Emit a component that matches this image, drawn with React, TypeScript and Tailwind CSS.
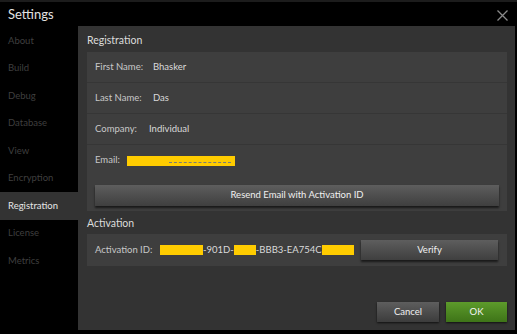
import React from 'react';

const navItems = ['About', 'Build', 'Debug', 'Database', 'View', 'Encryption', 'Registration', 'License', 'Metrics'];

const fields = [
  { label: 'First Name:', value: 'Bhasker', w: 'w-[58px]' },
  { label: 'Last Name:', value: 'Das', w: 'w-[58px]' },
  { label: 'Company:', value: 'Individual', w: 'w-[54px]' },
];

const Redact = ({ w }: { w: string }) => <span className={`inline-block shrink-0 h-[10px] bg-[#ffcc00] ${w}`} />;

const App: React.FC = () => {
  const active = 'Registration';
  return (
    <div
      className="w-[517px] h-[334px] bg-black border-t-2 border-[#1c1c1c] flex flex-col overflow-hidden text-[#d0d0d0]"
      style={{ fontFamily: 'Lato, "Open Sans", sans-serif' }}
    >
      {/* タイトルバー */}
      <div className="h-[24px] flex items-center justify-between pl-[8px] pr-[9px] shrink-0">
        <span className="text-[13px] text-[#e2e2e2] leading-none">Settings</span>
        <svg width="11" height="11" viewBox="0 0 11 11" className="mt-[2px]">
          <path d="M0.5 0.5 L10.5 10.5 M10.5 0.5 L0.5 10.5" stroke="#8a8a8a" strokeWidth="1.3" />
        </svg>
      </div>

      <div className="flex flex-1 min-h-0 pr-[2px] pb-[4px]">
        {/* サイドバー */}
        <div className="w-[78px] shrink-0 pt-[1px] flex flex-col">
          {navItems.map((item) => (
            <div
              key={item}
              className={`h-[27.5px] flex items-center pl-[8px] text-[9.5px] ${
                item === active ? 'bg-[#333333] text-[#e6e6e6]' : 'text-[#3f3f3f]'
              }`}
            >
              {item}
            </div>
          ))}
        </div>

        {/* メインパネル */}
        <div className="flex-1 min-w-0 overflow-hidden bg-[#333333] flex flex-col pl-[9px] pr-[8px]">
          <div className="h-[26px] flex items-end pb-[3px] text-[10.5px] text-[#dcdcdc]">Registration</div>
          <div className="bg-[#3e3e3e] flex flex-col">
            {fields.map((f) => (
              <div key={f.label} className="h-[31px] flex items-center px-[8px] border-b border-[#363636] text-[9.5px]">
                <span className={`text-[#c8c8c8] shrink-0 ${f.w}`}>{f.label}</span>
                <span className="text-[#dadada]">{f.value}</span>
              </div>
            ))}
            <div className="h-[31px] flex items-center px-[8px] text-[9.5px]">
              <span className="text-[#c8c8c8] w-[32px] shrink-0">Email:</span>
              <span className="relative inline-flex items-center">
                <Redact w="w-[108px]" />
                <span className="absolute left-[42px] top-[6px] w-[62px] border-t border-dashed border-[#7a7a7a]" />
              </span>
            </div>
            <div className="pt-[4px] pb-[5px] px-[8px]">
              <button className="w-full h-[21px] text-[9.5px] text-[#f0f0f0] bg-gradient-to-b from-[#5e5e5e] to-[#3f3f3f] shadow-[0_2px_2px_rgba(0,0,0,0.6)]">
                Resend Email with Activation ID
              </button>
            </div>
          </div>

          <div className="h-[23px] flex items-end pb-[2px] text-[10.5px] text-[#dcdcdc]">Activation</div>
          <div className="bg-[#3e3e3e] h-[32px] flex items-center px-[8px] text-[9.5px] whitespace-nowrap">
            <span className="text-[#c8c8c8] shrink-0 w-[65px]">Activation ID:</span>
            <span className="flex items-center text-[#dadada] shrink-0">
              <Redact w="w-[43px]" />
              <span>-901D-</span>
              <Redact w="w-[22px]" />
              <span>-BBB3-EA754C</span>
              <Redact w="w-[32px]" />
            </span>
            <button className="ml-auto mr-[1px] shrink-0 w-[137px] h-[20px] text-[9.5px] text-[#f0f0f0] bg-gradient-to-b from-[#5e5e5e] to-[#3f3f3f] shadow-[0_2px_2px_rgba(0,0,0,0.6)]">
              Verify
            </button>
          </div>

          <div className="flex-1" />
          <div className="flex justify-end gap-[7px] pb-[8px]">
            <button className="w-[62px] h-[20px] text-[9.5px] text-[#f0f0f0] bg-gradient-to-b from-[#5e5e5e] to-[#3c3c3c] shadow-[0_1px_2px_rgba(0,0,0,0.7)]">
              Cancel
            </button>
            <button className="w-[61px] h-[20px] text-[9.5px] text-[#f4f4f4] bg-gradient-to-b from-[#5d9b2b] to-[#3e7418] shadow-[0_1px_2px_rgba(0,0,0,0.7)]">
              OK
            </button>
          </div>
        </div>
      </div>
    </div>
  );
};

export default App;
